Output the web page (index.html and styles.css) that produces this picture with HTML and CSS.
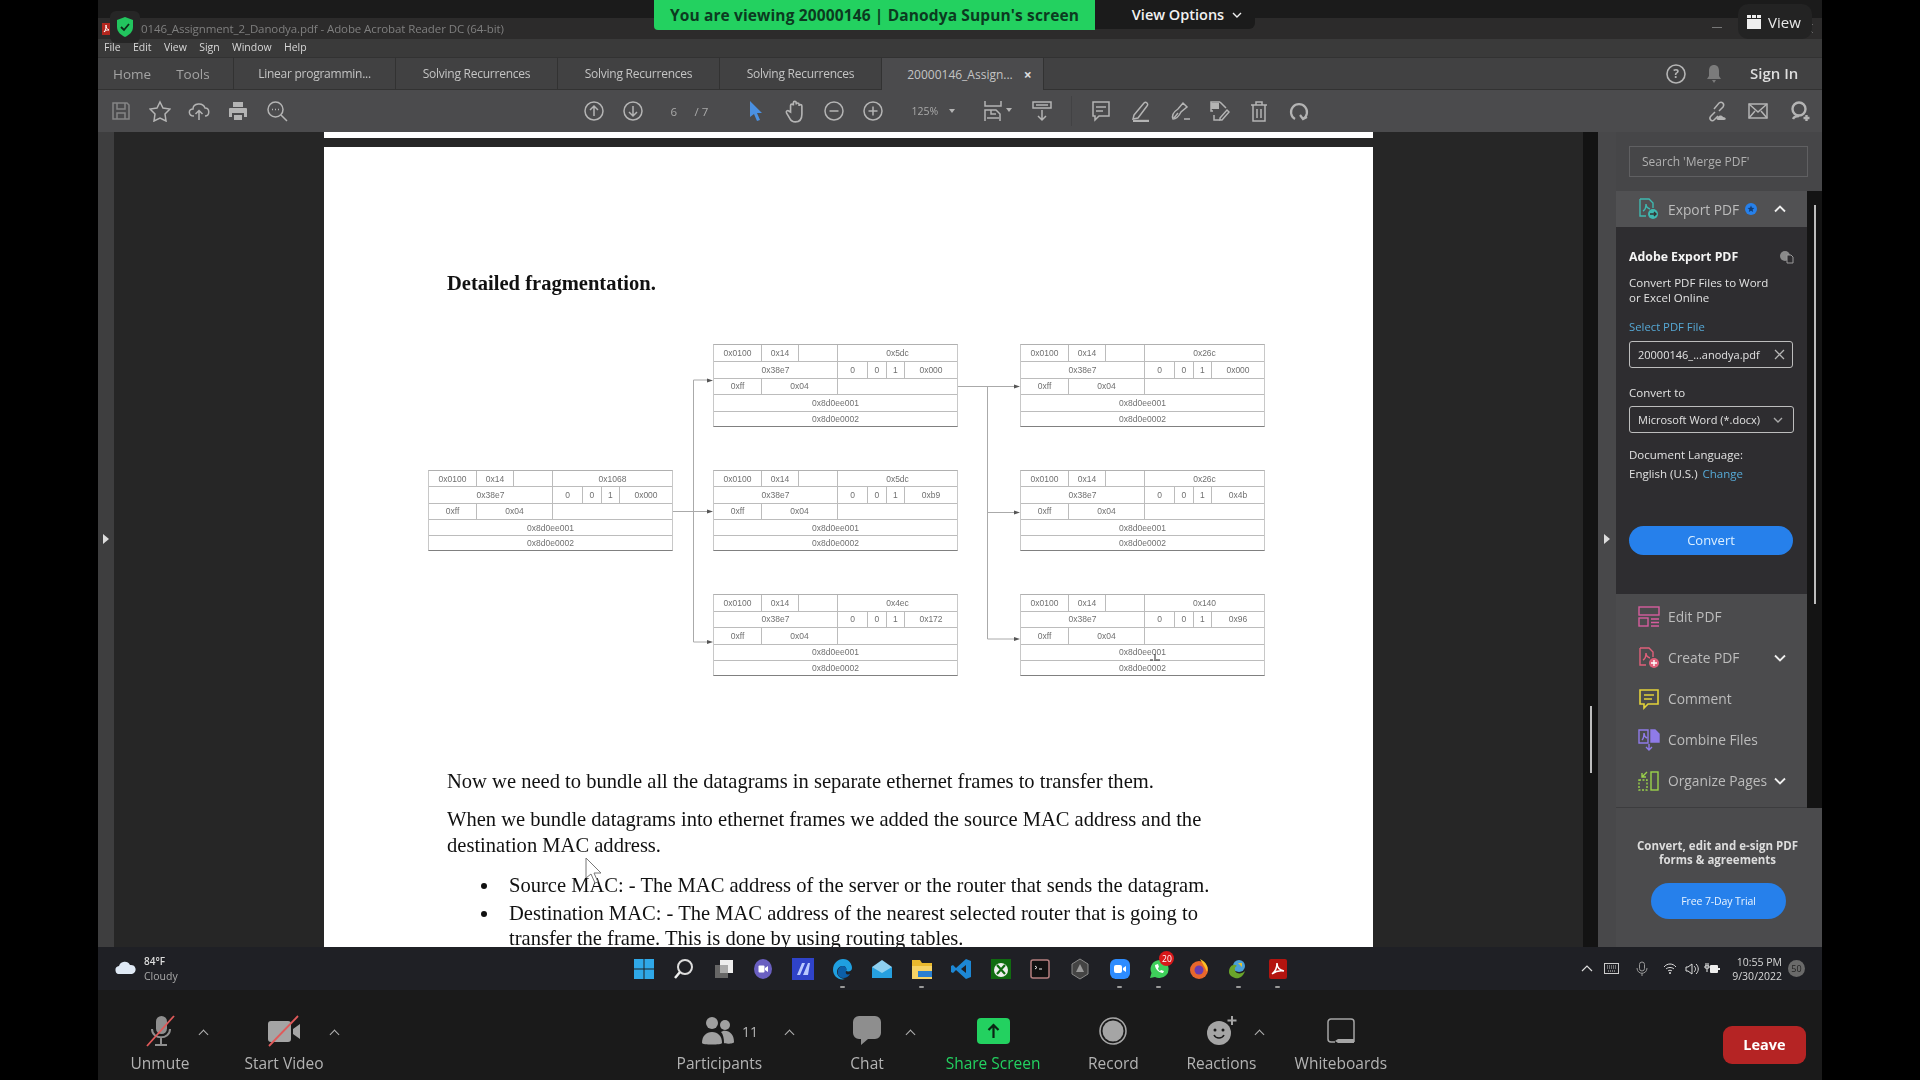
FILE: index.html
```html
<!DOCTYPE html>
<html lang="en">
<head>
    <meta charset="UTF-8">
    <title>Zoom - Adobe Acrobat Reader DC</title>
    <link rel="stylesheet" href="styles.css">
</head>
<body>
<div class="app">

    <!-- zoom banner -->
    <div class="banner">You are viewing 20000146 | Danodya Supun's screen</div>
    <div class="view-options">View Options
        <svg width="10" height="6" viewBox="0 0 10 6"><path d="M1 1l4 4 4-4" fill="none" stroke="#eee" stroke-width="1.4"/></svg>
    </div>
    <div class="view-btn">
        <svg width="16" height="16" viewBox="0 0 16 16"><rect x="1" y="5" width="14" height="10" fill="#eee"/><rect x="1" y="1" width="4" height="3" fill="#eee"/><rect x="6" y="1" width="4" height="3" fill="#eee"/><rect x="11" y="1" width="4" height="3" fill="#eee"/></svg>
        View
    </div>
    <div class="shield">
        <svg width="20" height="22" viewBox="0 0 20 22"><path d="M10 1l8 3v7c0 5-4 8-8 10-4-2-8-5-8-10V4z" fill="#22c55e"/><path d="M6 11l3 3 5-6" fill="none" stroke="#0c2c18" stroke-width="1.8"/></svg>
    </div>

    <div class="topgap"></div>
    <div class="titlebar">
        <svg class="acro" width="9" height="12" viewBox="0 0 9 12"><rect width="9" height="12" fill="#b3261e"/><path d="M2 9c2-2 2-5 2-7 0 3 1 4 3 5-2 0-3 0-5 2z" fill="none" stroke="#fff"/></svg>
        <span class="title-text">0146_Assignment_2_Danodya.pdf - Adobe Acrobat Reader DC (64-bit)</span>
        <span class="win-min"></span>
        <svg class="win-close" width="11" height="11" viewBox="0 0 11 11"><path d="M1 1l9 9M10 1l-9 9" stroke="#666"/></svg>
    </div>
    <div class="menubar">
        <span>File</span><span>Edit</span><span>View</span><span>Sign</span><span>Window</span><span>Help</span>
    </div>

    <div class="tabbar">
        <div class="tab-home"><span>Home</span><span>Tools</span></div>
        <div class="tab">Linear programmin...</div>
        <div class="tab">Solving Recurrences</div>
        <div class="tab">Solving Recurrences</div>
        <div class="tab">Solving Recurrences</div>
        <div class="tab tab-active">20000146_Assign... <b class="tab-x">&#215;</b></div>
        <div class="tab-right">
            <svg width="22" height="22" viewBox="0 0 22 22"><circle cx="11" cy="11" r="9" fill="none" stroke="#b5b5b5" stroke-width="1.6"/><text x="11" y="15" text-anchor="middle" class="help-q">?</text></svg>
            <svg class="bell" width="18" height="20" viewBox="0 0 18 20"><path d="M9 1c3 0 5 2 5 6v5l2 3H2l2-3V7c0-4 2-6 5-6zM7 16h4l-2 3z" fill="#7b7b7b"/></svg>
            <span class="signin">Sign In</span>
        </div>
    </div>

    <div class="toolbar">
        <div class="tb-btn dim"><svg class="ic" viewBox="0 0 22 22"><path d="M3 3h14l2 2v14H3zM7 3v6h8V3M7 19v-6h8v6"/></svg></div>
        <div class="tb-btn"><svg class="ic" viewBox="0 0 22 22"><path d="M11 2l3 6 7 1-5 5 1 7-6-3-6 3 1-7-5-5 7-1z"/></svg></div>
        <div class="tb-btn"><svg class="ic" viewBox="0 0 22 22"><path d="M6 16c-6 0-6-7-1-7 0-6 10-7 12-1 5 0 5 8 0 8M11 20v-9M7.5 14l3.5-3.500 3.500 3.500"/></svg></div>
        <div class="tb-btn"><svg class="ic" viewBox="0 0 22 22"><path class="solid" d="M6 2h10v5H6zM3 8h16a1 1 0 011 1v8h-3v-4H5v4H2V9a1 1 0 011-1zM7 15h8v5H7z"/></svg></div>
        <div class="tb-btn"><svg class="ic" viewBox="0 0 22 22"><circle cx="9.500" cy="9.500" r="7.500"/><path d="M15 15l6 6M6 9.500h1M9 9.500h1M12 9.500h1"/></svg></div>

        <div class="tb-btn page-nav"><svg class="ic" viewBox="0 0 22 22"><circle cx="11" cy="11" r="9"/><path d="M11 16V6M7 10l4-4 4 4"/></svg></div>
        <div class="tb-btn"><svg class="ic" viewBox="0 0 22 22"><circle cx="11" cy="11" r="9"/><path d="M11 6v10M7 12l4 4 4-4"/></svg></div>
        <div class="page-field"><span class="page-num">6</span><span>/ 7</span></div>
        <div class="tb-btn"><svg width="14" height="22" viewBox="0 0 14 22"><path d="M1 1l12 12H8l3 7-3 1-3-7-4 3z" fill="#4a90e2"/></svg></div>
        <div class="tb-btn"><svg class="ic hand" viewBox="0 0 22 22"><path d="M6 12V6a1.300 1.300 0 012.600 0V3.500a1.300 1.300 0 012.600 0V5a1.300 1.300 0 012.600 0v1.500a1.300 1.300 0 012.600 0V14c0 4-2 7-6 7-3 0-4-1-5-3l-3-5c-1-2 1-3 2-2z"/></svg></div>
        <div class="tb-btn"><svg class="ic" viewBox="0 0 22 22"><circle cx="11" cy="11" r="9"/><path d="M6.500 11h9"/></svg></div>
        <div class="tb-btn"><svg class="ic" viewBox="0 0 22 22"><circle cx="11" cy="11" r="9"/><path d="M6.500 11h9M11 6.500v9"/></svg></div>
        <div class="zoom-field"><span>125%</span><i class="caret-down"></i></div>
        <div class="tb-btn fit"><svg class="ic" viewBox="0 0 22 22"><path d="M3 1v5h16V1M3 21v-11h11l4 4v7M9 10v4h5M5 18h12"/></svg><i class="caret-down"></i></div>
        <div class="tb-btn keys"><svg class="ic" viewBox="0 0 22 22"><rect x="2" y="2" width="18" height="6"/><path d="M5 5h12M11 10v10M7 16l4 4 4-4"/></svg></div>
        <div class="tb-divider"></div>
        <div class="tb-btn w39"><svg class="ic" viewBox="0 0 22 22"><path d="M3 2h16v14H9l-4 4v-4H3zM6 7h10M6 11h7"/></svg></div>
        <div class="tb-btn w39"><svg class="ic" viewBox="0 0 22 22"><path d="M4 15L14 3c2-2 5 1 3 3L8 18l-5 1z"/><path class="thick" d="M3 21h16"/></svg></div>
        <div class="tb-btn w39"><svg class="ic" viewBox="0 0 22 22"><path d="M4 19c-2-5 2-8 5-10l5-6 4 4-6 5c-2 4-4 7-8 7zM9 13l-4 5M15 19h6"/></svg></div>
        <div class="tb-btn w39"><svg class="ic" viewBox="0 0 22 22"><path d="M12 2H3v9h2M6 15v5h6M12 2l6 6"/><rect class="solid" x="3" y="3" width="8" height="6"/><path d="M12 18l7-8 2 2-7 8h-2z"/></svg></div>
        <div class="tb-btn w39"><svg class="ic" viewBox="0 0 22 22"><path d="M3 5h16M8 5V2h6v3M5 5v16h12V5M9 9v9M13 9v9"/></svg></div>
        <div class="tb-btn w39"><svg class="ic thick-ic" viewBox="0 0 22 22"><path d="M8 19a8 8 0 118 0M13 15l3 4 4-2"/></svg></div>

        <div class="tb-btn link-btn"><svg class="ic" viewBox="0 0 22 22"><path d="M9 12l-4 4c-3 3 1 6 3 4l4-4M8 9l5-6c3-2 6 1 4 4l-4 4"/><path class="solid" d="M12 20c-2 0-2-3 0-3 1-2 4-2 5 0 3 0 4 3 1 3z"/></svg></div>
        <div class="tb-btn link-next"><svg class="ic" viewBox="0 0 22 22"><rect x="2" y="4" width="18" height="14"/><path d="M2 4l9 8 9-8M2 18l6-7M20 18l-6-7"/></svg></div>
        <div class="tb-btn user-btn"><svg class="ic" viewBox="0 0 22 22"><circle class="thick" cx="10" cy="9" r="6.500"/><path class="thick" d="M4 19c1-2 3-3 6-3M17.500 15v6M14.500 18h6"/></svg></div>
    </div>

    <div class="content">
        <div class="navstrip"><i class="tri"></i></div>

        <div class="docarea">
            <div class="prevpage"></div>
            <div class="page">
                <h2 class="doc-head">Detailed fragmentation.</h2>

                <div class="diagram">
                    <div class="frag c1 r2">
                        <div class="frow"><span class="w1">0x0100</span><span class="w2">0x14</span><span class="w3"></span><span class="w4">0x1068</span></div>
                        <div class="frow"><span class="w5">0x38e7</span><span class="w6">0</span><span class="w7">0</span><span class="w7">1</span><span class="w8">0x000</span></div>
                        <div class="frow"><span class="w1">0xff</span><span class="w9">0x04</span><span class="w4"></span></div>
                        <div class="frow"><span class="wf">0x8d0ee001</span></div>
                        <div class="frow"><span class="wf">0x8d0e0002</span></div>
                    </div>

                    <div class="frag c2 r1">
                        <div class="frow"><span class="w1">0x0100</span><span class="w2">0x14</span><span class="w3"></span><span class="w4">0x5dc</span></div>
                        <div class="frow"><span class="w5">0x38e7</span><span class="w6">0</span><span class="w7">0</span><span class="w7">1</span><span class="w8">0x000</span></div>
                        <div class="frow"><span class="w1">0xff</span><span class="w9">0x04</span><span class="w4"></span></div>
                        <div class="frow"><span class="wf">0x8d0ee001</span></div>
                        <div class="frow"><span class="wf">0x8d0e0002</span></div>
                    </div>
                    <div class="frag c2 r2">
                        <div class="frow"><span class="w1">0x0100</span><span class="w2">0x14</span><span class="w3"></span><span class="w4">0x5dc</span></div>
                        <div class="frow"><span class="w5">0x38e7</span><span class="w6">0</span><span class="w7">0</span><span class="w7">1</span><span class="w8">0xb9</span></div>
                        <div class="frow"><span class="w1">0xff</span><span class="w9">0x04</span><span class="w4"></span></div>
                        <div class="frow"><span class="wf">0x8d0ee001</span></div>
                        <div class="frow"><span class="wf">0x8d0e0002</span></div>
                    </div>
                    <div class="frag c2 r3">
                        <div class="frow"><span class="w1">0x0100</span><span class="w2">0x14</span><span class="w3"></span><span class="w4">0x4ec</span></div>
                        <div class="frow"><span class="w5">0x38e7</span><span class="w6">0</span><span class="w7">0</span><span class="w7">1</span><span class="w8">0x172</span></div>
                        <div class="frow"><span class="w1">0xff</span><span class="w9">0x04</span><span class="w4"></span></div>
                        <div class="frow"><span class="wf">0x8d0ee001</span></div>
                        <div class="frow"><span class="wf">0x8d0e0002</span></div>
                    </div>

                    <div class="frag c3 r1">
                        <div class="frow"><span class="w1">0x0100</span><span class="w2">0x14</span><span class="w3"></span><span class="w4">0x26c</span></div>
                        <div class="frow"><span class="w5">0x38e7</span><span class="w6">0</span><span class="w7">0</span><span class="w7">1</span><span class="w8">0x000</span></div>
                        <div class="frow"><span class="w1">0xff</span><span class="w9">0x04</span><span class="w4"></span></div>
                        <div class="frow"><span class="wf">0x8d0ee001</span></div>
                        <div class="frow"><span class="wf">0x8d0e0002</span></div>
                    </div>
                    <div class="frag c3 r2">
                        <div class="frow"><span class="w1">0x0100</span><span class="w2">0x14</span><span class="w3"></span><span class="w4">0x26c</span></div>
                        <div class="frow"><span class="w5">0x38e7</span><span class="w6">0</span><span class="w7">0</span><span class="w7">1</span><span class="w8">0x4b</span></div>
                        <div class="frow"><span class="w1">0xff</span><span class="w9">0x04</span><span class="w4"></span></div>
                        <div class="frow"><span class="wf">0x8d0ee001</span></div>
                        <div class="frow"><span class="wf">0x8d0e0002</span></div>
                    </div>
                    <div class="frag c3 r3">
                        <div class="frow"><span class="w1">0x0100</span><span class="w2">0x14</span><span class="w3"></span><span class="w4">0x140</span></div>
                        <div class="frow"><span class="w5">0x38e7</span><span class="w6">0</span><span class="w7">0</span><span class="w7">1</span><span class="w8">0x96</span></div>
                        <div class="frow"><span class="w1">0xff</span><span class="w9">0x04</span><span class="w4"></span></div>
                        <div class="frow"><span class="wf">0x8d0ee001</span></div>
                        <div class="frow"><span class="wf">0x8d0e0002</span></div>
                    </div>

                    <!-- connectors -->
                    <svg class="wires" width="836" height="332" viewBox="0 0 836 332">
                        <path d="M245 167.500H280M265.500 298V36H280M265.500 298H280M530 42.500H587M559.500 295V42.500M559.500 168.500H587M559.500 295H587" fill="none" stroke="#aaa"/>
                        <path d="M279 34.500l6 2-6 2zM279 165.500l6 2-6 2zM279 296l6 2-6 2zM586 40.500l6 2-6 2zM586 166.500l6 2-6 2zM586 293l6 2-6 2z" fill="#555"/>
                        <path d="M727 310v7M722 316h3M728 316h4" fill="none" stroke="#222"/>
                    </svg>
                </div>

                <p class="doc-p doc-p1">Now we need to bundle all the datagrams in separate ethernet frames to transfer them.</p>
                <p class="doc-p doc-p2">When we bundle datagrams into ethernet frames we added the source MAC address and the destination MAC address.</p>
                <ul class="doc-list">
                    <li>Source MAC: - The MAC address of the server or the router that sends the datagram.</li>
                    <li>Destination MAC: - The MAC address of the nearest selected router that is going to transfer the frame. This is done by using routing tables.</li>
                </ul>

                <svg class="mouse" width="18" height="28" viewBox="0 0 18 28"><path d="M1 1l0 20 5-4 4 9 3-1-4-9h7z" fill="#fff" stroke="#777"/></svg>
            </div>
        </div>

        <div class="vscroll"><div class="vthumb"></div></div>
        <div class="panelstrip"><i class="tri"></i></div>

        <div class="panel">
            <div class="search-wrap"><div class="search">Search 'Merge PDF'</div></div>
            <div class="tools">
                <div class="tools-main">
                    <div class="tool-row tool-open">
                        <svg class="tool-ic" viewBox="0 0 22 22" fill="none" stroke="#3fb8b0" stroke-width="1.4"><path d="M2 1h9l4 4v5M2 1v17h6M5 13c2-1 3-4 3-7 0 3 1 4 4 5"/><circle class="teal" cx="15" cy="16" r="5" fill="#3fb8b0" stroke="none"/><path d="M12 16h6M16 14l2 2-2 2" stroke="#333"/></svg>
                        <span>Export PDF</span>
                        <svg class="star-badge" width="12" height="12" viewBox="0 0 12 12"><circle cx="6" cy="6" r="6" fill="#2680eb"/><path d="M6 2.500l1 2.300 2.400.2-1.800 1.600.6 2.400L6 7.800 3.800 9l.6-2.400L2.600 5 5 4.800z" fill="#123e78"/></svg>
                        <svg class="chev" width="12" height="8" viewBox="0 0 12 8"><path d="M1 6.500l5-5 5 5" fill="none" stroke="#eee" stroke-width="1.800"/></svg>
                    </div>
                    <div class="export">
                        <div class="exp-title">Adobe Export PDF
                            <svg width="14" height="13" viewBox="0 0 14 13"><circle cx="5" cy="5" r="5" fill="#8a8a8a"/><path d="M7 4h4l2 2v6H7z" fill="#2e2d30" stroke="#9a9a9a"/></svg>
                        </div>
                        <p class="exp-desc">Convert PDF Files to Word<br>or Excel Online</p>
                        <div class="exp-link">Select PDF File</div>
                        <div class="exp-input"><span>20000146_...anodya.pdf</span>
                            <svg width="11" height="11" viewBox="0 0 11 11"><path d="M1 1l9 9M10 1l-9 9" stroke="#b5b5b5" stroke-width="1.300"/></svg>
                        </div>
                        <div class="exp-label">Convert to</div>
                        <div class="exp-select"><span>Microsoft Word (*.docx)</span>
                            <svg width="10" height="6" viewBox="0 0 10 6"><path d="M1 1l4 4 4-4" fill="none" stroke="#aaa" stroke-width="1.400"/></svg>
                        </div>
                        <div class="exp-lang">Document Language:</div>
                        <div class="exp-lang2">English (U.S.) <a>Change</a></div>
                        <div class="exp-btn">Convert</div>
                    </div>
                    <div class="tool-list">
                        <div class="tool-row">
                            <svg class="tool-ic" viewBox="0 0 22 22" fill="none" stroke="#d65d9e" stroke-width="1.400"><rect x="1" y="1" width="20" height="8"/><rect x="1" y="12" width="9" height="8"/><path d="M13 13h8M13 16.500h8M13 20h8"/></svg>
                            <span>Edit PDF</span>
                        </div>
                        <div class="tool-row">
                            <svg class="tool-ic" viewBox="0 0 22 22" fill="none" stroke="#e0607a" stroke-width="1.400"><path d="M2 1h9l4 4v5M2 1v17h6M5 13c2-1 3-4 3-7 0 3 1 4 4 5"/><circle cx="16" cy="16" r="5" fill="#e0607a" stroke="none"/><path d="M13 16h6M16 13v6" stroke="#fff"/></svg>
                            <span>Create PDF</span>
                            <svg class="chev" width="12" height="8" viewBox="0 0 12 8"><path d="M1 1.500l5 5 5-5" fill="none" stroke="#eee" stroke-width="1.800"/></svg>
                        </div>
                        <div class="tool-row">
                            <svg class="tool-ic" viewBox="0 0 22 22" fill="none" stroke="#e3d23a" stroke-width="1.600"><path d="M2 2h18v14H10l-4 4v-4H2zM6 7h10M6 11h8"/></svg>
                            <span>Comment</span>
                        </div>
                        <div class="tool-row">
                            <svg class="tool-ic" viewBox="0 0 22 22" fill="none" stroke="#8f7be8" stroke-width="1.400"><path d="M1 1h9v13H1zM4 11c2-2 2-4 2-7 0 3 1 4 3 5"/><path d="M13 1l4 0 4 4v8h-8z" fill="#8f7be8"/><path d="M11 15v6M8 18l3 3 3-3"/></svg>
                            <span>Combine Files</span>
                        </div>
                        <div class="tool-row">
                            <svg class="tool-ic" viewBox="0 0 22 22" fill="none" stroke="#9ad24a" stroke-width="1.400"><rect x="13" y="2" width="7" height="18"/><path d="M1 10h8v10H1z" stroke-dasharray="2 1.500"/><path d="M9 2L4 7M4 3v4h4"/></svg>
                            <span>Organize Pages</span>
                            <svg class="chev" width="12" height="8" viewBox="0 0 12 8"><path d="M1 1.500l5 5 5-5" fill="none" stroke="#eee" stroke-width="1.800"/></svg>
                        </div>
                    </div>
                </div>
                <div class="tools-scroll"><div class="tools-thumb"></div></div>
            </div>
            <div class="promo">
                <p>Convert, edit and e-sign PDF<br>forms &amp; agreements</p>
                <div class="promo-btn">Free 7-Day Trial</div>
            </div>
        </div>
    </div>

    <div class="taskbar">
        <svg class="weather" width="22" height="14" viewBox="0 0 22 14"><path d="M5 14a4 4 0 01-1-8 6 6 0 0111-1 4.500 4.500 0 012 9z" fill="#dfe9f5"/></svg>
        <div class="weather-text"><div class="temp">84°F</div><div class="cloudy">Cloudy</div></div>

        <div class="tk-icons">
            <div class="tk"><svg viewBox="0 0 22 22"><path d="M1 1h9.500v9.500H1zM11.500 1H21v9.500h-9.500zM1 11.500h9.500V21H1zM11.500 11.500H21V21h-9.500z" fill="#2fa8e8"/></svg></div>
            <div class="tk"><svg viewBox="0 0 22 22"><circle cx="12" cy="9" r="7" fill="none" stroke="#ddd" stroke-width="2"/><path d="M7 14l-5 6" stroke="#eee" stroke-width="2.500"/></svg></div>
            <div class="tk"><svg viewBox="0 0 22 22"><rect x="2" y="7" width="13" height="13" fill="#666"/><rect x="7" y="2" width="13" height="13" fill="#eee"/><rect x="7" y="7" width="8" height="8" fill="#aaa"/></svg></div>
            <div class="tk"><svg viewBox="0 0 22 22"><ellipse cx="11" cy="11" rx="9" ry="10" fill="#6a5fc1"/><rect x="6.500" y="7.500" width="6" height="7" rx="1" fill="#fff"/><path d="M13 10l3-2v6l-3-2z" fill="#fff"/></svg></div>
            <div class="tk"><svg viewBox="0 0 22 22"><rect width="22" height="22" fill="#2f43c9"/><path d="M5 17l5-12h3l-5 12zM11 17l5-12h2l-2 12z" fill="#b9c9ff"/></svg></div>
            <div class="tk on"><svg viewBox="0 0 22 22"><path d="M2 12C2 5 7 1 12 1c6 0 9 5 9 9 0 3-3 4-6 3 1-2 0-5-3-5-4 0-6 3-6 6 0 4 4 7 8 7-6 2-12-3-12-9z" fill="#1f9fe0"/><path d="M7 12c1-3 3-4 5-4 3 0 4 3 3 5-1 3 1 4 4 3-2 4-7 5-10 3-2-1-3-4-2-7z" fill="#0c5fa8"/></svg></div>
            <div class="tk"><svg viewBox="0 0 22 22"><path d="M1 9h20v11H1z" fill="#26a0e0"/><path d="M1 9l10-7 10 7-10 6z" fill="#8fd0f0"/></svg></div>
            <div class="tk on"><svg viewBox="0 0 22 22"><path d="M1 2h8l2 3h10v6H1z" fill="#e9b92e"/><rect x="1" y="8" width="20" height="13" fill="#f6d365"/><rect x="7" y="13" width="14" height="6" fill="#2a7fd0"/></svg></div>
            <div class="tk"><svg viewBox="0 0 22 22"><path d="M16 1l5 2v16l-5 2L6 12l-3 3-2-1V8l2-1 3 3zM16 7l-5 4 5 4z" fill="#1d87d4"/></svg></div>
            <div class="tk"><svg viewBox="0 0 22 22"><rect x="1" y="1" width="20" height="20" fill="#106b10"/><circle cx="11" cy="12" r="7" fill="#eee"/><path d="M7 7l8 9M15 7l-8 9" stroke="#106b10" stroke-width="2.200"/></svg></div>
            <div class="tk"><svg viewBox="0 0 22 22"><rect x="2" y="2" width="18" height="18" rx="2" fill="#111" stroke="#b57f7f" stroke-width="1.500"/><path d="M6 8l2 1.500L6 11M10 11h3" stroke="#eee" fill="none"/></svg></div>
            <div class="tk"><svg viewBox="0 0 22 22"><path d="M11 1l8 5v10l-8 5-8-5V6z" fill="#444" stroke="#888"/><path d="M11 6l4 8H7z" fill="#999"/></svg></div>
            <div class="tk on"><svg viewBox="0 0 22 22"><rect x="1" y="1" width="20" height="20" rx="6" fill="#2d8cff"/><rect x="5" y="7" width="8" height="8" rx="2" fill="#fff"/><path d="M14 10l3-2v6l-3-2z" fill="#fff"/></svg></div>
            <div class="tk on"><svg viewBox="0 0 22 22"><path d="M2 20l1.500-5A9 9 0 1111 20a9 9 0 01-4-1z" fill="#3ecf5a"/><path d="M7 7c0 4 4 8 8 8l1-2-3-1-1 1c-1 0-2-2-2-3l1-1-1-3z" fill="#fff"/></svg><b class="tk-badge">20</b></div>
            <div class="tk"><svg viewBox="0 0 22 22"><circle cx="11" cy="12" r="9" fill="#e8672c"/><path d="M12 1c6 3 9 8 7 13-1-3-3-6-7-13z" fill="#fbbf24"/><circle cx="11" cy="12" r="4.500" fill="#6a3bb0"/></svg></div>
            <div class="tk on"><svg viewBox="0 0 22 22"><circle cx="12" cy="8" r="6" fill="#4aa0d8"/><path d="M2 14c0-6 5-9 8-6-3 1-3 5 0 7 3 1 6 0 8-2-2 6-6 8-10 7-3-1-6-3-6-6z" fill="#6aa52a"/><path d="M11 5h4v4z" fill="#e8c22e"/></svg></div>
            <div class="tk on"><svg viewBox="0 0 22 22"><rect x="2" y="1" width="18" height="20" rx="2" fill="#b3140f"/><path d="M5 16c4-3 5-7 5-11 0 4 2 7 7 8-5-1-8 0-12 3z" fill="none" stroke="#fff" stroke-width="1.500"/></svg></div>
        </div>

        <div class="tray">
            <svg class="t1" width="12" height="7" viewBox="0 0 12 7"><path d="M1 6l5-5 5 5" fill="none" stroke="#ddd" stroke-width="1.200"/></svg>
            <svg class="t2" width="15" height="11" viewBox="0 0 15 11"><rect x=".5" y=".5" width="14" height="10" fill="none" stroke="#ccc"/><path d="M3 3h9M3 5h9M4 8h7" stroke="#ccc" stroke-dasharray="1 1"/></svg>
            <svg class="t3" width="12" height="16" viewBox="0 0 12 16"><rect x="3.500" y="1" width="5" height="9" rx="2.500" fill="none" stroke="#999"/><path d="M1 7c0 7 10 7 10 0M6 12v3" fill="none" stroke="#999"/></svg>
            <svg class="t4" width="14" height="11" viewBox="0 0 14 11"><path d="M1 4c3-4 9-4 12 0M3 6c2-2 6-2 8 0M5 8c1-1 3-1 4 0" fill="none" stroke="#ddd"/><circle cx="7" cy="10" r="1" fill="#ddd"/></svg>
            <svg class="t5" width="15" height="12" viewBox="0 0 15 12"><path d="M1 4h2l4-3v10L3 8H1zM9 3c2 2 2 4 0 6M11 1c3 3 3 7 0 10" fill="none" stroke="#ddd"/></svg>
            <svg class="t6" width="16" height="12" viewBox="0 0 16 12"><path d="M2 0v3M4 0v3M1 3h4v2H1zM3 5v4" stroke="#eee" fill="none"/><rect x="6" y="2" width="8" height="8" rx="1" fill="#eee"/><path d="M14 5h2v2h-2z" fill="#eee"/></svg>
            <div class="clock"><div>10:55 PM</div><div>9/30/2022</div></div>
            <div class="notif">50</div>
        </div>
    </div>

    <div class="zoombar">
        <div class="zb w-unmute">
            <svg width="30" height="32" viewBox="0 0 30 32"><rect x="11" y="1" width="11" height="18" rx="5.500" fill="#8f8f8f"/><path d="M7 14c0 11 18 11 18 0M16 23v6M10 30h12" fill="none" stroke="#8f8f8f" stroke-width="2"/><path d="M2 31L29 1" stroke="#e05a5a" stroke-width="1.800"/></svg>
            <span>Unmute</span>
        </div>
        <i class="up"></i>
        <div class="zb w-video">
            <svg width="34" height="32" viewBox="0 0 34 32"><rect x="1" y="6" width="23" height="21" rx="3" fill="#a5a5a5"/><path d="M26 14l7-5v15l-7-5z" fill="#a5a5a5"/><path d="M2 31L31 1" stroke="#e05a5a" stroke-width="1.800"/></svg>
            <span>Start Video</span>
        </div>
        <i class="up"></i>
        <div class="zb w-part">
            <div class="part-ic">
                <svg width="34" height="30" viewBox="0 0 34 30"><circle cx="11" cy="7" r="6" fill="#a0a0a0"/><circle cx="24" cy="9" r="5" fill="#a0a0a0"/><path d="M1 27c0-7 4-11 10-11s10 4 10 11c0 2-20 2-20 0z" fill="#a0a0a0"/><path d="M22 15c6-1 11 3 11 11 0 2-9 2-10 1 0-5-1-9-3-11z" fill="#a0a0a0"/></svg>
                <span class="count">11</span>
            </div>
            <span>Participants</span>
        </div>
        <i class="up"></i>
        <div class="zb w-chat">
            <svg width="30" height="32" viewBox="0 0 30 32"><path d="M7 1h16a6 6 0 016 6v11a6 6 0 01-6 6h-7l-7 6v-6H7a6 6 0 01-6-6V7a6 6 0 016-6z" fill="#8e8e8e"/></svg>
            <span>Chat</span>
        </div>
        <i class="up"></i>
        <div class="zb w-share">
            <svg width="33" height="26" viewBox="0 0 33 26"><rect width="33" height="26" rx="4" fill="#23d160"/><path d="M16.500 20V8M11.500 12l5-5 5 5" fill="none" stroke="#0b2514" stroke-width="2.200"/></svg>
            <span class="share-text">Share Screen</span>
        </div>
        <div class="zb w-record">
            <svg width="28" height="28" viewBox="0 0 28 28"><circle cx="14" cy="14" r="13" fill="none" stroke="#a5a5a5" stroke-width="1.600"/><circle cx="14" cy="14" r="10.500" fill="#a5a5a5"/></svg>
            <span>Record</span>
        </div>
        <div class="zb w-react">
            <svg width="32" height="32" viewBox="0 0 32 32"><circle cx="14" cy="18" r="12" fill="#a5a5a5"/><circle cx="10" cy="15" r="1.500" fill="#1a1a1a"/><circle cx="18" cy="15" r="1.500" fill="#1a1a1a"/><path d="M9 20c2 4 8 4 10 0" fill="none" stroke="#1a1a1a" stroke-width="1.600"/><path d="M27 1v9M22.500 5.500h9" stroke="#a5a5a5" stroke-width="2"/></svg>
            <span>Reactions</span>
        </div>
        <i class="up up-react"></i>
        <div class="zb w-white">
            <svg width="28" height="26" viewBox="0 0 28 26"><path d="M8 24H4a3 3 0 01-3-3V4a3 3 0 013-3h20a3 3 0 013 3v20" fill="none" stroke="#a5a5a5" stroke-width="1.500"/><path d="M11 21h16v4H11l-3-2z" fill="#a5a5a5"/></svg>
            <span>Whiteboards</span>
        </div>
        <div class="leave">Leave</div>
    </div>
</div>
</body>
</html>
```

FILE: styles.css
```css
html, body {
    margin: 0;
    padding: 0;
    width: 1920px;
    height: 1080px;
    overflow: hidden;
    background: #000;
    font-family: "Open Sans", "Noto Sans", sans-serif;
}
.app {
    position: relative;
    width: 1724px;
    height: 1080px;
    margin-left: 98px;
    display: flex;
    flex-direction: column;
    filter: blur(0.35px);
}

/* zoom overlays */
.banner {
    position: absolute;
    left: 556px;
    top: 0;
    width: 441px;
    height: 30px;
    background: #23d160;
    border-radius: 0 0 0 4px;
    color: #0c3a20;
    font: bold 15.5px/30px "Open Sans", sans-serif;
    letter-spacing: 0.13px;
    text-align: center;
    white-space: nowrap;
    z-index: 5;
}
.view-options {
    position: absolute;
    left: 997px;
    top: 0;
    width: 160px;
    height: 29px;
    background: #1b1b1b;
    border-radius: 0 0 6px 0;
    color: #f2f2f2;
    font: 600 14.5px/29px "Open Sans", sans-serif;
    display: flex;
    align-items: center;
    justify-content: center;
    gap: 8px;
    padding-left: 24px;
    box-sizing: border-box;
    z-index: 5;
}
.view-btn {
    position: absolute;
    left: 1640px;
    top: 4px;
    width: 74px;
    height: 35px;
    background: #232323;
    border-radius: 10px;
    color: #e8e8e8;
    font-size: 15px;
    display: flex;
    align-items: center;
    gap: 6px;
    padding-left: 8px;
    box-sizing: border-box;
    z-index: 5;
}
.shield {
    position: absolute;
    left: 12px;
    top: 11px;
    width: 30px;
    height: 32px;
    background: #262626;
    border-radius: 6px;
    display: flex;
    align-items: center;
    justify-content: center;
    z-index: 5;
}

/* window chrome */
.topgap { height: 18px; background: #1b1b1b; flex: none; }
.titlebar {
    height: 21px;
    flex: none;
    background: #2c2b2b;
    display: flex;
    align-items: center;
    position: relative;
    color: #7f7f7f;
    font-size: 11.5px;
}
.acro { margin-left: 4px; }
.title-text { margin-left: 30px; letter-spacing: -0.1px; }
.win-min { position: absolute; left: 1614px; top: 9px; width: 10px; height: 1px; background: #777; }
.win-close { position: absolute; left: 1705px; top: 5px; }
.menubar {
    height: 18px;
    flex: none;
    background: #3a3a3a;
    display: flex;
    align-items: center;
    padding: 0 0 2px 6px;
    box-sizing: border-box;
    gap: 12.3px;
    color: #d8d8d8;
    font-size: 10.5px;
}
.tabbar {
    height: 33px;
    flex: none;
    background: #414142;
    border-top: 1px solid #323232;
    border-bottom: 1px solid #323232;
    box-sizing: border-box;
    display: flex;
    align-items: stretch;
    color: #c4c4c4;
    font-size: 12px;
    letter-spacing: -0.25px;
}
.tab-home {
    width: 136px;
    box-sizing: border-box;
    padding-left: 15px;
    display: flex;
    align-items: center;
    gap: 25px;
    color: #a4a4a4;
    font-size: 13.5px;
    letter-spacing: 0;
    border-right: 1px solid #323232;
}
.tab {
    width: 162px;
    box-sizing: border-box;
    display: flex;
    align-items: center;
    justify-content: center;
    border-right: 1px solid #323232;
    white-space: nowrap;
}
.tab-active {
    background: #4b4b4d;
    position: relative;
    margin-bottom: -1px;
    padding-left: 14px;
    gap: 11px;
    letter-spacing: 0;
}
.tab-x { color: #ddd; font-size: 14px; }
.tab-right {
    margin-left: auto;
    padding-right: 21px;
    display: flex;
    align-items: center;
}
.help-q { font: bold 12px "Open Sans", sans-serif; fill: #b5b5b5; }
.bell { margin-left: 18px; margin-right: 27px; }
.signin { color: #dedede; font-weight: 600; font-size: 15px; letter-spacing: 0; width: 51px; white-space: nowrap; margin-top: -2px; }

.toolbar {
    height: 42px;
    flex: none;
    background: #4b4b4d;
    display: flex;
    align-items: center;
    padding: 0 9px 0 3.5px;
    color: #a9a9a9;
    font-size: 11.5px;
}
.tb-btn {
    width: 39px;
    height: 42px;
    flex: none;
    display: flex;
    align-items: center;
    justify-content: center;
    position: relative;
}
.tb-btn.dim { opacity: 0.55; }
.tb-btn.w39 { width: 39.4px; }
.ic {
    width: 22px;
    height: 22px;
    fill: none;
    stroke: #b4b4b4;
    stroke-width: 1.5;
}
.ic .solid { fill: #b4b4b4; stroke: none; }
.ic .thick { stroke-width: 2.4; }
.ic.hand { width: 24px; height: 24px; margin-left: 2px; }
.thick-ic { stroke-width: 2.2; }
.page-nav { margin-left: 278px; }
.page-field { width: 84px; flex: none; display: flex; padding-left: 18px; box-sizing: border-box; gap: 18px; }
.page-num { display: block; width: 6px; }
.zoom-field {
    width: 81px;
    flex: none;
    padding-left: 19px;
    box-sizing: border-box;
    display: flex;
    align-items: center;
    gap: 11px;
    font-size: 10.5px;
}
.caret-down {
    width: 0;
    height: 0;
    border-left: 3.5px solid transparent;
    border-right: 3.5px solid transparent;
    border-top: 4px solid #b4b4b4;
}
.fit .caret-down { position: absolute; right: 1px; top: 18px; }
.keys { margin-left: 10px; }
.tb-divider { width: 1px; height: 30px; background: #424244; margin-left: 9px; margin-right: 10px; flex: none; }
.link-btn { margin-left: auto; width: 41px; }
.link-next { width: 41px; }
.user-btn { width: 26px; margin-left: 8.5px; }

/* main area */
.content {
    flex: 1;
    min-height: 0;
    display: flex;
}
.navstrip {
    width: 16px;
    flex: none;
    background: #3e3e3f;
    display: flex;
    align-items: center;
    justify-content: center;
}
.tri {
    display: block;
    width: 0;
    height: 0;
    border-top: 5px solid transparent;
    border-bottom: 5px solid transparent;
    border-left: 6px solid #ddd;
    margin-top: -1px;
}
.docarea {
    width: 1469px;
    flex: none;
    background: #262626;
    display: flex;
    flex-direction: column;
    padding-left: 210px;
    padding-right: 210px;
    box-sizing: border-box;
}
.prevpage { height: 6px; background: #fff; flex: none; margin-bottom: 9px; }
.page {
    flex: 1;
    min-height: 0;
    background: #fff;
    overflow: hidden;
    position: relative;
    color: #111;
    font-family: "Liberation Serif", serif;
    font-size: 20.55px;
    padding-top: 124px;
    box-sizing: border-box;
}
.doc-head {
    margin: 0 0 0 123px;
    font-size: 20.55px;
    line-height: 24px;
    font-weight: bold;
}

.diagram {
    position: relative;
    width: 836px;
    height: 332px;
    margin: 49px 0 0 104px;
    display: grid;
    grid-template-columns: 245px 40px 245px 62px 245px;
    grid-template-rows: 83px 81px 82px;
    row-gap: 43px;
    font-family: "Liberation Sans", sans-serif;
    font-size: 8.5px;
    color: #707070;
}
.c1 { grid-column: 1; }
.c2 { grid-column: 3; }
.c3 { grid-column: 5; }
.r1 { grid-row: 1; }
.r2 { grid-row: 2; }
.r3 { grid-row: 3; }
.frag {
    display: flex;
    flex-direction: column;
    border: 1px solid #b0b0b0;
    border-bottom-color: #808080;
    border-left-color: #c8c8c8;
    border-right-color: #c8c8c8;
    box-sizing: border-box;
}
.frow {
    flex: 17 1 0;
    display: flex;
    border-bottom: 1px solid #bcbcbc;
}
.frow:last-child { border-bottom: none; flex-grow: 15; }
.frow span {
    display: flex;
    align-items: center;
    justify-content: center;
    border-right: 1px solid #bcbcbc;
    box-sizing: border-box;
    flex: none;
}
.frow span:last-child { border-right: none; }
.w1 { width: 48px; }
.w2 { width: 37px; }
.w3 { width: 39px; }
.w4 { width: 119px; }
.w5 { width: 124px; }
.w6 { width: 30px; }
.w7 { width: 18.500px; }
.w8 { width: 52px; }
.w9 { width: 76px; }
.wf { width: 100%; }
.wires { position: absolute; left: 0; top: 0; }

.doc-p { margin: 0 0 0 123px; width: 778px; line-height: 26px; }
.doc-p1 { margin-top: 92px; }
.doc-p2 { margin-top: 12px; }
.doc-list { margin: 15px 0 0 0; padding: 0 0 0 185px; width: 716px; line-height: 25px; list-style: none; }
.doc-list li { margin-bottom: 3px; position: relative; }
.doc-list li::before {
    content: "";
    position: absolute;
    left: -28px;
    top: 10px;
    width: 6px;
    height: 6px;
    border-radius: 50%;
    background: #111;
}
.mouse { position: absolute; left: 261px; top: 710px; }

.vscroll { width: 15px; flex: none; background: #131313; position: relative; }
.vthumb { position: absolute; left: 7px; top: 574px; width: 2px; height: 67px; background: #bdbdbd; }
.panelstrip {
    width: 18px;
    flex: none;
    background: #48484a;
    display: flex;
    align-items: center;
    justify-content: center;
}

/* right panel */
.panel {
    flex: 1;
    background: #4b4b4d;
    display: flex;
    flex-direction: column;
    color: #bbb;
    font-size: 12px;
}
.search-wrap { height: 59px; flex: none; padding: 14px 14px 0 13px; box-sizing: border-box; background: #464648; }
.search {
    height: 31px;
    border: 1px solid #606062;
    box-sizing: border-box;
    padding-left: 12px;
    line-height: 30px;
    color: #b0b0b0;
}
.tools { height: 617px; flex: none; display: flex; }
.tools-main { width: 191px; flex: none; display: flex; flex-direction: column; }
.tools-scroll { flex: 1; background: #141414; position: relative; }
.tools-thumb { position: absolute; left: 7px; top: 14px; width: 2px; height: 399px; background: #bdbdbd; }
.tool-row {
    height: 41px;
    display: flex;
    align-items: center;
    padding-left: 22px;
    box-sizing: border-box;
    font-size: 13.8px;
    color: #bcbcbc;
    white-space: nowrap;
    position: relative;
}
.tool-open { height: 36px; background: #515153; }
.tool-ic { width: 22px; height: 22px; flex: none; margin-right: 8px; }
.star-badge { margin-left: 6px; }
.chev { position: absolute; left: 158px; }
.tool-list { flex: 1; padding-top: 2px; border-bottom: 1px solid #3c3c3e; }

.export {
    height: 367px;
    flex: none;
    background: #2e2d30;
    padding: 22px 0 0 13px;
    box-sizing: border-box;
    color: #e2e2e2;
    font-size: 11.5px;
}
.exp-title {
    width: 165px;
    line-height: 16px;
    font-weight: bold;
    font-size: 12.3px;
    color: #f4f4f4;
    display: flex;
    justify-content: space-between;
    align-items: center;
}
.exp-desc { margin: 10px 0 0 0; line-height: 15px; }
.exp-link { margin-top: 15px; line-height: 14px; color: #56a9d6; font-size: 11.3px; }
.exp-input, .exp-select {
    height: 27px;
    width: 164px;
    margin-top: 7px;
    border: 1px solid #bdbdbd;
    border-radius: 3px;
    box-sizing: border-box;
    padding: 0 7px 0 8px;
    display: flex;
    align-items: center;
    justify-content: space-between;
    white-space: nowrap;
    font-size: 11px;
}
.exp-label { margin-top: 18px; line-height: 14px; }
.exp-select { width: 165px; margin-top: 6px; padding-right: 10px; }
.exp-lang { margin-top: 15px; line-height: 14px; }
.exp-lang2 { margin-top: 5px; line-height: 14px; }
.exp-lang2 a { color: #56a9d6; margin-left: 2px; }
.exp-btn {
    margin-top: 45px;
    width: 164px;
    height: 29px;
    border-radius: 15px;
    background: #2680eb;
    color: #dcefff;
    font-size: 13px;
    line-height: 29px;
    text-align: center;
}

.promo { flex: 1; padding: 31px 3px 0 0; box-sizing: border-box; text-align: center; }
.promo p { margin: 0; font-size: 11.5px; font-weight: bold; line-height: 13.500px; color: #dcdcdc; }
.promo-btn {
    width: 135px;
    height: 36px;
    margin: 17px 0 0 35px;
    border-radius: 18px;
    background: #2680eb;
    color: #e8f3ff;
    font-size: 10.5px;
    letter-spacing: -0.1px;
    line-height: 36px;
}

/* windows taskbar */
.taskbar {
    height: 43px;
    flex: none;
    background: #1f2025;
    display: flex;
    align-items: center;
    color: #ddd;
    position: relative;
}
.weather { margin: -3px 0 0 17px; flex: none; }
.weather-text { margin-left: 7px; width: 60px; font-size: 10px; line-height: 15px; }
.temp { font-weight: 600; }
.cloudy { color: #a8a8a8; font-size: 10.5px; }
.tk-icons { display: flex; margin-left: 420.700px; }
.tk {
    width: 39.600px;
    height: 43px;
    display: flex;
    align-items: center;
    justify-content: center;
    position: relative;
}
.tk svg { width: 22px; height: 22px; }
.tk.on::after {
    content: "";
    position: absolute;
    left: 17px;
    bottom: 2px;
    width: 5px;
    height: 2px;
    background: #9a9a9a;
    border-radius: 1px;
}
.tk-badge {
    position: absolute;
    left: 20px;
    top: 4px;
    width: 15px;
    height: 15px;
    border-radius: 8px;
    background: #d8181a;
    color: #fff;
    font-size: 8.5px;
    font-weight: normal;
    line-height: 15px;
    text-align: center;
}
.tray { margin-left: auto; display: flex; align-items: center; padding-right: 17px; }
.tray svg { flex: none; }
.t2 { margin-left: 11px; }
.t3 { margin-left: 17px; }
.t4 { margin-left: 15px; }
.t5 { margin-left: 8px; }
.t6 { margin-left: 4px; }
.clock { width: 62px; text-align: right; font-size: 10.5px; line-height: 14px; color: #d8d8d8; white-space: nowrap; }
.notif {
    width: 17px;
    height: 17px;
    border-radius: 50%;
    background: #6a6a6a;
    color: #222;
    font-size: 9px;
    line-height: 17px;
    text-align: center;
    margin-left: 6px;
}

/* zoom toolbar */
.zoombar {
    height: 90px;
    flex: none;
    background: #1a1a1a;
    display: flex;
    align-items: flex-start;
    color: #b3b3b3;
    font-size: 15.5px;
    padding-left: 24px;
}
.zb {
    flex: none;
    display: flex;
    flex-direction: column;
    align-items: center;
    white-space: nowrap;
    padding-top: 25px;
    height: 90px;
    box-sizing: border-box;
}
.zb svg { height: 32px; flex: none; }
.zb > span { margin-top: 6px; line-height: 20px; }
.w-unmute { width: 76px; }
.w-video { width: 90px; margin-left: 32px; }
.w-part { width: 100px; margin-left: 331.4px; }
.w-chat { width: 60px; margin-left: 42.7px; }
.w-share { width: 100px; margin-left: 29px; }
.w-record { width: 70px; margin-left: 35.3px; }
.w-react { width: 72px; margin-left: 37px; }
.w-white { width: 100px; margin-left: 28px; }
.share-text { color: #23d160; }
.part-ic { display: flex; align-items: center; height: 32px; margin-left: 20px; gap: 7px; font-size: 14px; }
.up {
    flex: none;
    width: 7px;
    height: 7px;
    border-left: 1.6px solid #b3b3b3;
    border-top: 1.6px solid #b3b3b3;
    transform: rotate(45deg);
    margin: 41px 0 0 2px;
    box-sizing: border-box;
}
.w-part + .up { margin-left: 17px; margin-right: 1px; }
.w-chat + .up { margin-left: 10px; margin-right: 0; }
.up-react { margin-left: -1.5px; margin-right: 0; }
.leave {
    margin: 36px 16px 0 auto;
    width: 83px;
    height: 38px;
    border-radius: 9px;
    background: #b52424;
    color: #fff;
    font-weight: bold;
    font-size: 14.5px;
    line-height: 38px;
    text-align: center;
}
```
